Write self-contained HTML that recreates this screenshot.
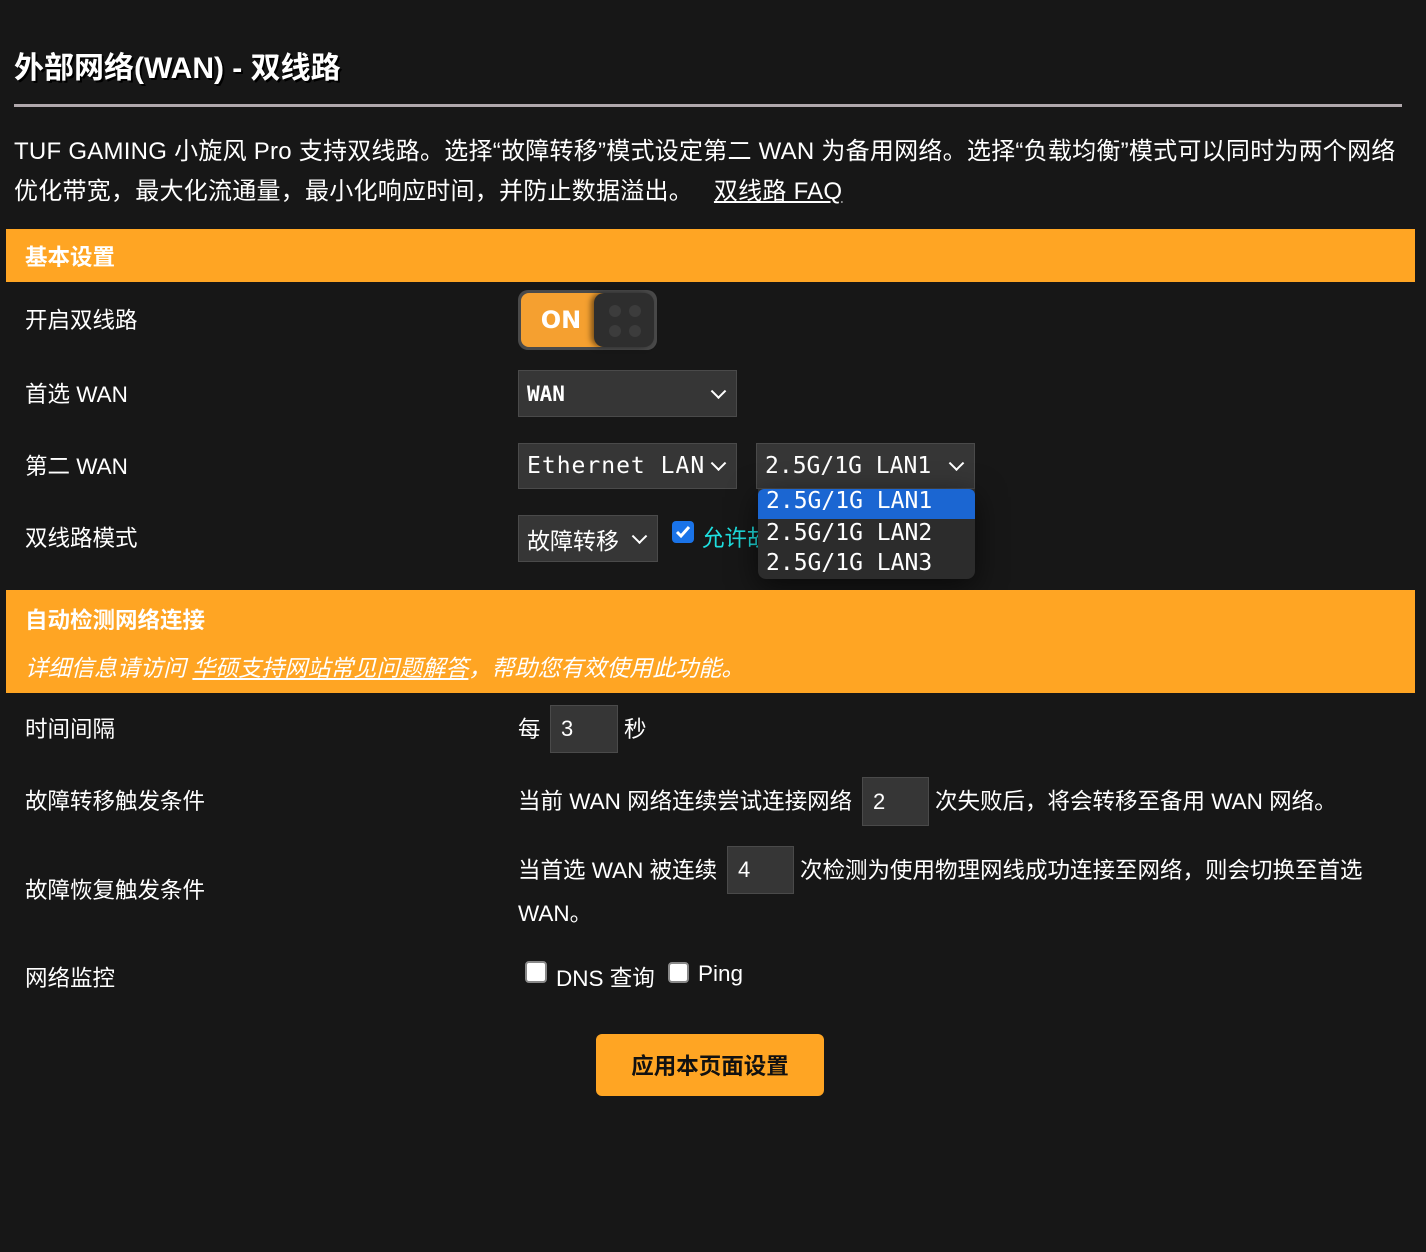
<!DOCTYPE html>
<html><head><meta charset="utf-8"><style>
*{box-sizing:border-box;margin:0;padding:0}
body{width:1426px;height:1252px;background:#171717;color:#fff;font-family:"Liberation Sans","Noto Sans CJK SC",sans-serif;position:relative;overflow:hidden}
.a{position:absolute;white-space:nowrap}
.t{font-size:22.5px}
.sel{position:absolute;background:#363636;border:1px solid #4a4a4a;font-family:"DejaVu Sans Mono",monospace;font-size:21px;color:#fff;padding-left:8px;display:flex;align-items:center}
.chev{position:absolute;right:12px;top:50%;width:11px;height:11px;border-right:2px solid #fff;border-bottom:2px solid #fff;transform:translateY(-75%) rotate(45deg)}
.inp{position:absolute;background:#363636;border:1px solid #4a4a4a;font-size:22px;padding-left:10px;display:flex;align-items:center}
.band{position:absolute;left:6px;width:1409px;background:#ffa523}
.cb{position:absolute;width:22px;height:22px;background:#fff;border:2px solid #888;border-radius:4px}
</style></head><body>
<div class="a" style="left:14px;top:43px;font-size:30px;font-weight:bold;text-shadow:2px 2px 0 #000">外部网络(WAN) - 双线路</div>
<div class="a" style="left:14px;top:104px;width:1388px;height:3px;background:#b0a8ac"></div>
<div class="a" style="left:14px;top:131px;font-size:24px;letter-spacing:0.25px">TUF GAMING 小旋风 Pro 支持双线路。选择“故障转移”模式设定第二 WAN 为备用网络。选择“负载均衡”模式可以同时为两个网络</div>
<div class="a" style="left:14px;top:171px;font-size:24px;letter-spacing:0.25px">优化带宽，最大化流通量，最小化响应时间，并防止数据溢出。 <u style="margin-left:14px">双线路 FAQ</u></div>

<div class="band" style="top:229px;height:53px"></div>
<div class="a" style="left:25px;top:240px;font-size:22.5px;font-weight:bold">基本设置</div>

<div class="a t" style="left:25px;top:303px">开启双线路</div>
<div class="a" style="left:518px;top:290px;width:139px;height:60px;border-radius:10px;background:#4a4a4a;padding:3px">
 <div style="position:absolute;left:3px;top:3px;width:92px;height:54px;border-radius:8px 0 0 8px;background:#f5a030;font-family:'DejaVu Sans',sans-serif;font-weight:bold;font-size:24px;display:flex;align-items:center;justify-content:center;padding-right:12px;color:#fff">ON</div>
 <div style="position:absolute;left:76px;top:3px;width:60px;height:54px;border-radius:10px;background:#2e2e2e;box-shadow:-3px 0 6px rgba(0,0,0,.5)">
  <svg width="60" height="54"><g fill="#3c3c3c"><circle cx="21" cy="18" r="6"/><circle cx="41" cy="18" r="6"/><circle cx="21" cy="38" r="6"/><circle cx="41" cy="38" r="6"/></g></svg>
 </div>
</div>

<div class="a t" style="left:25px;top:377px">首选 WAN</div>
<div class="sel" style="left:518px;top:370px;width:219px;height:47px;font-weight:bold">WAN<span class="chev"></span></div>

<div class="a t" style="left:25px;top:449px">第二 WAN</div>
<div class="sel" style="left:518px;top:443px;width:219px;height:46px;font-size:23px;letter-spacing:1px">Ethernet LAN<span class="chev"></span></div>
<div class="sel" style="left:756px;top:443px;width:219px;height:46px;font-size:23px">2.5G/1G LAN1<span class="chev"></span></div>

<div class="a t" style="left:25px;top:521px">双线路模式</div>
<div class="sel" style="left:518px;top:515px;width:140px;height:47px;font-family:'Liberation Sans','Noto Sans CJK SC',sans-serif;font-size:23px">故障转移<span class="chev"></span></div>
<div class="a" style="left:672px;top:521px;width:22px;height:22px;background:#1a73e8;border-radius:4px"><svg width="22" height="22"><path d="M5 11l4 4 8-9" stroke="#fff" stroke-width="3" fill="none"/></svg></div>
<div class="a t" style="left:702px;top:521px;color:#1ee0e0">允许故</div>

<div class="a" style="left:758px;top:489px;width:217px;height:90px;background:#2c2c2c;border-radius:0 0 8px 8px;box-shadow:0 8px 30px rgba(0,0,0,.6);font-family:'DejaVu Sans Mono',monospace;font-size:23px;overflow:hidden">
 <div style="height:30px;background:#1b66d2;border-radius:6px 6px 0 0;padding-left:8px;line-height:24px">2.5G/1G LAN1</div>
 <div style="height:30px;padding-left:8px;line-height:28px">2.5G/1G LAN2</div>
 <div style="height:30px;padding-left:8px;line-height:28px">2.5G/1G LAN3</div>
</div>

<div class="band" style="top:590px;height:103px"></div>
<div class="a" style="left:25px;top:603px;font-size:22.5px;font-weight:bold">自动检测网络连接</div>
<div class="a" style="left:25px;top:649px;font-size:23px;font-style:italic">详细信息请访问 <u>华硕支持网站常见问题解答</u>，帮助您有效使用此功能。</div>

<div class="a t" style="left:25px;top:712px">时间间隔</div>
<div class="a t" style="left:518px;top:712px">每</div>
<div class="inp" style="left:550px;top:705px;width:68px;height:48px">3</div>
<div class="a t" style="left:624px;top:712px">秒</div>

<div class="a t" style="left:25px;top:784px">故障转移触发条件</div>
<div class="a t" style="left:518px;top:784px">当前 WAN 网络连续尝试连接网络</div>
<div class="inp" style="left:862px;top:777px;width:67px;height:49px">2</div>
<div class="a t" style="left:935px;top:784px">次失败后，将会转移至备用 WAN 网络。</div>

<div class="a t" style="left:25px;top:873px">故障恢复触发条件</div>
<div class="a t" style="left:518px;top:853px">当首选 WAN 被连续</div>
<div class="inp" style="left:727px;top:846px;width:67px;height:48px">4</div>
<div class="a t" style="left:800px;top:853px">次检测为使用物理网线成功连接至网络，则会切换至首选</div>
<div class="a t" style="left:518px;top:896px">WAN。</div>

<div class="a t" style="left:25px;top:961px">网络监控</div>
<div class="cb" style="left:525px;top:961px"></div>
<div class="a t" style="left:556px;top:961px">DNS 查询</div>
<div class="cb" style="left:668px;top:962px;width:21px;height:21px"></div>
<div class="a t" style="left:698px;top:961px">Ping</div>

<div class="a" style="left:596px;top:1034px;width:228px;height:62px;background:#ffa523;border-radius:6px;color:#111;font-size:22.5px;font-weight:bold;display:flex;align-items:center;justify-content:center">应用本页面设置</div>
</body></html>
